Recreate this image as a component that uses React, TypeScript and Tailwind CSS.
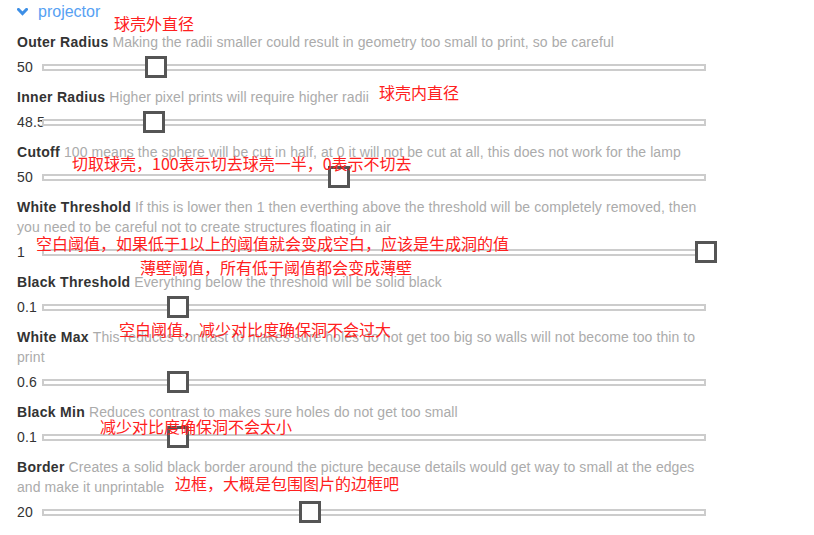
import React from "react";

type Param = {
  label: string;
  desc: string;
  value: string;
  thumb: number; // absolute x of thumb left edge
};

const params: Param[] = [
  {
    label: "Outer Radius",
    desc: "Making the radii smaller could result in geometry too small to print, so be careful",
    value: "50",
    thumb: 145,
  },
  {
    label: "Inner Radius",
    desc: "Higher pixel prints will require higher radii",
    value: "48.5",
    thumb: 143,
  },
  {
    label: "Cutoff",
    desc: "100 means the sphere will be cut in half, at 0 it will not be cut at all, this does not work for the lamp",
    value: "50",
    thumb: 328,
  },
  {
    label: "White Threshold",
    desc: "If this is lower then 1 then everthing above the threshold will be completely removed, then you need to be careful not to create structures floating in air",
    value: "1",
    thumb: 695,
  },
  {
    label: "Black Threshold",
    desc: "Everything below the threshold will be solid black",
    value: "0.1",
    thumb: 167,
  },
  {
    label: "White Max",
    desc: "This reduces contrast to makes sure holes do not get too big so walls will not become too thin to print",
    value: "0.6",
    thumb: 167,
  },
  {
    label: "Black Min",
    desc: "Reduces contrast to makes sure holes do not get too small",
    value: "0.1",
    thumb: 167,
  },
  {
    label: "Border",
    desc: "Creates a solid black border around the picture because details would get way to small at the edges and make it unprintable",
    value: "20",
    thumb: 299,
  },
];

const notes: { text: string; left: number; top: number }[] = [
  { text: "球壳外直径", left: 114, top: 15 },
  { text: "球壳内直径", left: 379, top: 84 },
  { text: "切取球壳，100表示切去球壳一半，0表示不切去", left: 72, top: 155 },
  { text: "空白阈值，如果低于1以上的阈值就会变成空白，应该是生成洞的值", left: 36, top: 235 },
  { text: "薄壁阈值，所有低于阈值都会变成薄壁", left: 140, top: 259 },
  { text: "空白阈值，减少对比度确保洞不会过大", left: 119, top: 321 },
  { text: "减少对比度确保洞不会太小", left: 100, top: 418 },
  { text: "边框，大概是包围图片的边框吧", left: 175, top: 475 },
];

function Row({ p }: { p: Param }) {
  return (
    <div className="flex flex-col">
      <div className="text-[14px] leading-[20px]">
        <span className="font-bold tracking-[0.3px] text-[#333333]">{p.label}</span>{" "}
        <span className="tracking-[0.08px] text-[#ababab]">{p.desc}</span>
      </div>
      <div className="mt-[4px] flex h-[22px] items-center">
        <div className="w-[25px] shrink-0 whitespace-nowrap text-[14px] leading-[22px] tracking-[0.2px] text-[#333333]">
          {p.value}
        </div>
        <div className="relative h-[7px] flex-1 border-2 border-[#cccccc] bg-white">
          <div
            className="absolute top-1/2 h-[22px] w-[22px] -translate-y-1/2 border-[3px] border-[#555555] bg-white"
            style={{ left: p.thumb - 44 }}
          />
        </div>
      </div>
    </div>
  );
}

export default function App() {
  return (
    <div className="relative h-[535px] w-[814px] overflow-hidden bg-white font-['Liberation_Sans',Arial,sans-serif]">
      <div className="w-[706px] pl-[17px]">
        <div className="flex items-center pt-[2px] text-[16px] leading-[20px]">
          <svg width="11" height="8" viewBox="0 0 11 8" className="mr-[10px] shrink-0">
            <polyline
              points="1.5,1.5 5.5,5.6 9.5,1.5"
              fill="none"
              stroke="#3d8fe6"
              strokeWidth="3"
              strokeLinecap="square"
            />
          </svg>
          <span className="text-[#57a1f3]">projector</span>
        </div>
        <div className="mt-[10px] flex flex-col gap-[9px]">
          {params.map((p) => (
            <Row key={p.label} p={p} />
          ))}
        </div>
      </div>
      {notes.map((n) => (
        <div
          key={n.text}
          className="absolute whitespace-nowrap font-['Noto_Sans_CJK_SC',sans-serif] text-[16px] leading-[16px] text-[#ff2020]"
          style={{ left: n.left, top: n.top }}
        >
          {n.text}
        </div>
      ))}
    </div>
  );
}
